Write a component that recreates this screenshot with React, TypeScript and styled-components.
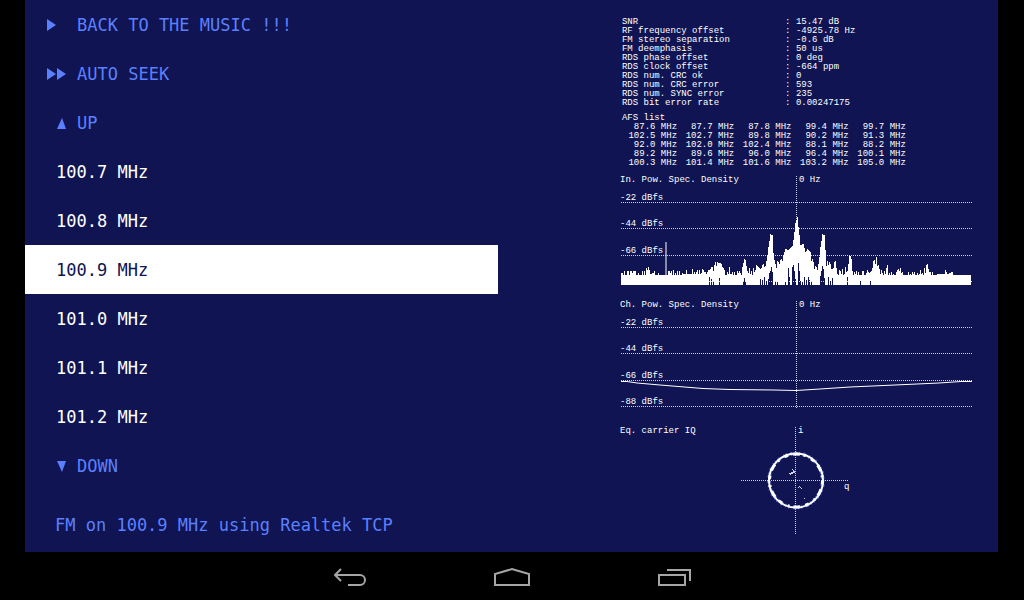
import React from "react";
import styled, { createGlobalStyle } from "styled-components";

const NAVY = "#101452";
const BLUE = "#5b80ff";

const GlobalStyle = createGlobalStyle`
  * { box-sizing: border-box; }
  body { margin: 0; background: #000; }
`;

const Device = styled.div`
  display: flex;
  flex-direction: column;
  min-height: 100vh;
  background: #000;
`;

const Screen = styled.main`
  flex: 1;
  display: flex;
  margin: 0 26px 0 25px;
  background: ${NAVY};
`;

const TunerPane = styled.section`
  flex: 0 0 auto;
  width: 48.6%;
  display: flex;
  flex-direction: column;
  font-family: "DejaVu Sans Mono", "Liberation Mono", monospace;
  font-size: 17px;
`;

const Menu = styled.ul`
  list-style: none;
  margin: 0;
  padding: 0;
`;

const MenuButton = styled.button<{ $kind: "action" | "station"; $selected?: boolean }>`
  display: flex;
  align-items: center;
  width: 100%;
  height: 49px;
  padding: 0 0 0 ${(p) => (p.$kind === "action" ? 21 : 31)}px;
  border: 0;
  font: inherit;
  text-align: left;
  white-space: pre;
  background: ${(p) => (p.$selected ? "#fff" : "transparent")};
  color: ${(p) => (p.$selected ? NAVY : p.$kind === "action" ? BLUE : "#fff")};
`;

const Arrow = styled.svg`
  flex: none;
  width: 31px;
  height: 12px;
  fill: currentColor;
`;

const Status = styled.p`
  flex: 1;
  display: flex;
  align-items: center;
  margin: 0;
  padding: 8px 0 0 30px;
  color: ${BLUE};
  white-space: nowrap;
`;

const SignalPane = styled.section`
  flex: 1;
  padding: 18px 0 0 122px;
  color: #fff;
  font-family: "Liberation Mono", monospace;
  font-size: 9px;
  line-height: 9px;
  white-space: nowrap;
`;

const DataTable = styled.table`
  border-collapse: collapse;
  table-layout: fixed;

  th, td {
    padding: 0;
    font-weight: normal;
    text-align: left;
  }
`;

const StatsTable = styled(DataTable)`
  width: 290px;
  margin: 0 0 6px 2px;

  th { width: 163px; }
  td:nth-child(2) { width: 11px; }
`;

const StationTable = styled(DataTable)`
  width: 286px;
  margin-bottom: 5px;

  caption {
    padding-left: 2px;
    text-align: left;
  }
  td { text-align: right; }
`;

const Plot = styled.svg`
  display: block;
  width: 352px;
  height: 125px;
  fill: #fff;
`;

const GridLine = styled.line`
  stroke: #fff;
  stroke-opacity: 0.8;
  stroke-dasharray: 1 1;
  shape-rendering: crispEdges;
`;

const SystemBar = styled.nav`
  display: flex;
  justify-content: center;
  height: 48px;
`;

const SystemButton = styled.button`
  display: grid;
  place-items: center;
  width: 162px;
  padding: 0;
  border: 0;
  background: none;

  svg {
    width: 36px;
    height: 24px;
    fill: none;
    stroke: #a6a6a6;
    stroke-width: 2;
  }
`;

type ArrowKind = "play" | "seek" | "up" | "down";

const ARROWS: Record<ArrowKind, string> = {
  play: "M1 0L10 6L1 12Z",
  seek: "M1 0L10 6L1 12ZM11 0L20 6L11 12Z",
  up: "M16 1L20 12H11Z",
  down: "M11 1H20L16 12Z",
};

const MENU: { label: string; arrow?: ArrowKind; selected?: boolean }[] = [
  { label: "BACK TO THE MUSIC !!!", arrow: "play" },
  { label: "AUTO SEEK", arrow: "seek" },
  { label: "UP", arrow: "up" },
  { label: "100.7 MHz" },
  { label: "100.8 MHz" },
  { label: "100.9 MHz", selected: true },
  { label: "101.0 MHz" },
  { label: "101.1 MHz" },
  { label: "101.2 MHz" },
  { label: "DOWN", arrow: "down" },
];

const STATS: [string, string][] = [
  ["SNR", "15.47 dB"],
  ["RF frequency offset", "-4925.78 Hz"],
  ["FM stereo separation", "-0.6 dB"],
  ["FM deemphasis", "50 us"],
  ["RDS phase offset", "0 deg"],
  ["RDS clock offset", "-664 ppm"],
  ["RDS num. CRC ok", "0"],
  ["RDS num. CRC error", "593"],
  ["RDS num. SYNC error", "235"],
  ["RDS bit error rate", "0.00247175"],
];

const ALTERNATIVES = [
  ["87.6", "87.7", "87.8", "99.4", "99.7"],
  ["102.5", "102.7", "89.8", "90.2", "91.3"],
  ["92.0", "102.0", "102.4", "88.1", "88.2"],
  ["89.2", "89.6", "96.0", "96.4", "100.1"],
  ["100.3", "101.4", "101.6", "103.2", "105.0"],
];

// Upper envelope of the input spectrum as [x, y] pairs.
const ENVELOPE: [number, number][] = [
  [1, 101], [17, 101], [25, 101], [27, 94], [29, 100], [34, 101], [52, 101], [53, 97],
  [54, 101], [71, 100], [72, 96], [74, 100], [80, 100], [82, 93], [83, 100], [89, 100],
  [90, 96], [93, 98], [95, 92], [98, 87], [100, 87], [103, 98],
  [105, 102], [109, 97], [111, 102], [121, 101], [123, 87], [125, 84], [127, 95],
  [130, 100], [133, 98], [137, 90], [140, 93], [145, 90], [147, 85], [148, 74],
  [150, 61], [152, 62], [153, 80], [155, 94], [158, 89], [162, 85], [165, 76],
  [168, 77], [172, 73], [173, 67], [175, 50], [177, 44], [178, 54], [179, 62],
  [180, 72], [183, 71], [185, 79], [187, 76], [190, 79], [191, 85], [193, 92],
  [197, 94], [199, 87], [200, 74], [202, 61], [204, 62], [205, 77], [206, 93],
  [208, 89], [210, 94], [215, 91], [217, 98], [220, 101], [225, 97], [227, 95],
  [229, 86], [231, 86], [232, 98], [237, 102], [246, 101], [251, 98], [253, 91],
  [256, 87], [258, 92], [260, 100], [265, 98], [267, 92], [268, 101], [273, 102],
  [278, 99], [282, 96], [283, 101], [293, 102], [303, 99], [308, 93], [309, 102],
  [324, 101], [325, 97], [327, 101], [332, 99], [333, 102], [351, 102],
];

// Columns whose trace stops short of the plot floor: x -> y.
const LIFTED: Record<number, number> = {
  89: 104, 91: 106, 93: 108, 99: 105, 123: 108, 124: 105, 125: 109, 140: 106,
  142: 107, 144: 104, 146: 108, 148: 106, 149: 100, 150: 98, 151: 94, 152: 99,
  155: 108, 157: 109, 165: 109, 168: 95, 169: 104, 172: 94, 173: 92, 174: 98,
  175: 106, 178: 90, 179: 98, 180: 108, 182: 109, 184: 104, 186: 107, 188: 104,
  189: 107, 191: 108, 200: 103, 201: 98, 202: 93, 203: 96, 204: 105,
  208: 104, 210: 108, 212: 105, 227: 104, 240: 108, 250: 108,
};

const noise = (x: number) => {
  const n = Math.sin(x * 127.1 + 11.7) * 43758.5453;
  return n - Math.floor(n);
};

function spectrumPath() {
  let path = "";
  let segment = 0;
  for (let x = 1; x < 351; x++) {
    while (x >= ENVELOPE[segment + 1][0]) segment++;
    const [x0, y0] = ENVELOPE[segment];
    const [x1, y1] = ENVELOPE[segment + 1];
    const level = y0 + ((y1 - y0) * (x - x0)) / (x1 - x0);
    const r = noise(x);
    let lift = 0;
    if (level >= 84 && x < 313) {
      if (level > 99) lift = r > 0.72 ? -3 : r > 0.5 ? -1 : 1;
      else lift = r > 0.7 ? -3 : r > 0.4 ? 0 : 3;
    }
    const top = Math.min(102, Math.round(level + lift));
    path += `M${x} ${top}h1V${LIFTED[x] ?? 112}h-1Z`;
  }
  return path;
}

function DensityPlot({ title, levels, children }: {
  title: string;
  levels: string[];
  children: React.ReactNode;
}) {
  return (
    <Plot viewBox="0 0 352 125" role="img" aria-label={title}>
      <text x="0" y="9">{title}</text>
      <text x="179" y="9">0 Hz</text>
      <GridLine x1="176.5" x2="176.5" y1="3" y2="111" />
      {[29, 55, 82, 108].map((y, i) => (
        <g key={y}>
          <GridLine x1="1" x2="352" y1={y + 0.5} y2={y + 0.5} />
          {levels[i] && <text x="0" y={y - 2}>{levels[i]}</text>}
        </g>
      ))}
      {children}
    </Plot>
  );
}

export default function App() {
  return (
    <Device>
      <GlobalStyle />
      <Screen>
        <TunerPane>
          <Menu>
            {MENU.map(({ label, arrow, selected }) => (
              <li key={label}>
                <MenuButton type="button" $kind={arrow ? "action" : "station"} $selected={selected}>
                  {arrow && (
                    <Arrow viewBox="0 0 31 12" aria-hidden="true">
                      <path d={ARROWS[arrow]} />
                    </Arrow>
                  )}
                  {label}
                </MenuButton>
              </li>
            ))}
          </Menu>
          <Status>FM on 100.9 MHz using Realtek TCP</Status>
        </TunerPane>

        <SignalPane>
          <StatsTable>
            <tbody>
              {STATS.map(([name, value]) => (
                <tr key={name}>
                  <th scope="row">{name}</th>
                  <td>:</td>
                  <td>{value}</td>
                </tr>
              ))}
            </tbody>
          </StatsTable>
          <StationTable>
            <caption>AFS list</caption>
            <tbody>
              {ALTERNATIVES.map((row) => (
                <tr key={row[0]}>
                  {row.map((f) => <td key={f}>{f} MHz</td>)}
                </tr>
              ))}
            </tbody>
          </StationTable>

          <DensityPlot title="In. Pow. Spec. Density" levels={["-22 dBfs", "-44 dBfs", "-66 dBfs"]}>
            <path d={spectrumPath()} shapeRendering="crispEdges" />
            <path d="M45 69h2V102h-2Z" fillOpacity="0.5" />
          </DensityPlot>
          <DensityPlot title="Ch. Pow. Spec. Density" levels={["-22 dBfs", "-44 dBfs", "-66 dBfs", "-88 dBfs"]}>
            <path
              d="M1 83.5H7L17 85L40 87L83 90.5L110 91.5L154 92L176 92.5L200 91L230 89L275 87L319 85L341 83.5H352"
              fill="none"
              stroke="#fff"
            />
          </DensityPlot>
          <Plot viewBox="0 0 352 125" role="img" aria-label="Eq. carrier IQ">
            <text x="0" y="10">Eq. carrier IQ</text>
            <text x="178" y="10">i</text>
            <text x="224" y="66">q</text>
            <GridLine x1="175.5" x2="175.5" y1="4" y2="111" />
            <GridLine x1="121" x2="229" y1="57.5" y2="57.5" />
            <g fill="none">
              <circle cx="176" cy="57.5" r="27" stroke="#4a62d8" strokeWidth="4" strokeDasharray="1 3 2 4 1 2" />
              <circle cx="176" cy="57.5" r="27" stroke="#fff" strokeWidth="2" />
              <circle cx="176" cy="57.5" r="26.5" stroke="#fff" strokeWidth="3" strokeDasharray="4 5 7 4 2 6" />
            </g>
            <path
              d="M169 50h2v-1h2v-2h1v2h1v1h-2v1h-2v1h-1v-1h-1ZM174 48h1v1h-1ZM172 46h1v1h-1ZM178 64h1v-1h1v1h1v1h1v1h-1v-1h-1v-1h-1v1h-1ZM184 75h1v1h-1Z"
              fillOpacity="0.8"
            />
          </Plot>
        </SignalPane>
      </Screen>

      <SystemBar aria-label="System">
        <SystemButton type="button" aria-label="Back">
          <svg viewBox="0 0 36 24"><path d="M9 5L3 11L9 17M3 11H28A5 5 0 0 1 28 21H16" /></svg>
        </SystemButton>
        <SystemButton type="button" aria-label="Home">
          <svg viewBox="0 0 36 24"><path d="M1 21V10L18 5L35 10V21Z" /></svg>
        </SystemButton>
        <SystemButton type="button" aria-label="Recent apps">
          <svg viewBox="0 0 36 24"><path d="M3 11H29V21H3ZM11 6H34V17" /></svg>
        </SystemButton>
      </SystemBar>
    </Device>
  );
}
